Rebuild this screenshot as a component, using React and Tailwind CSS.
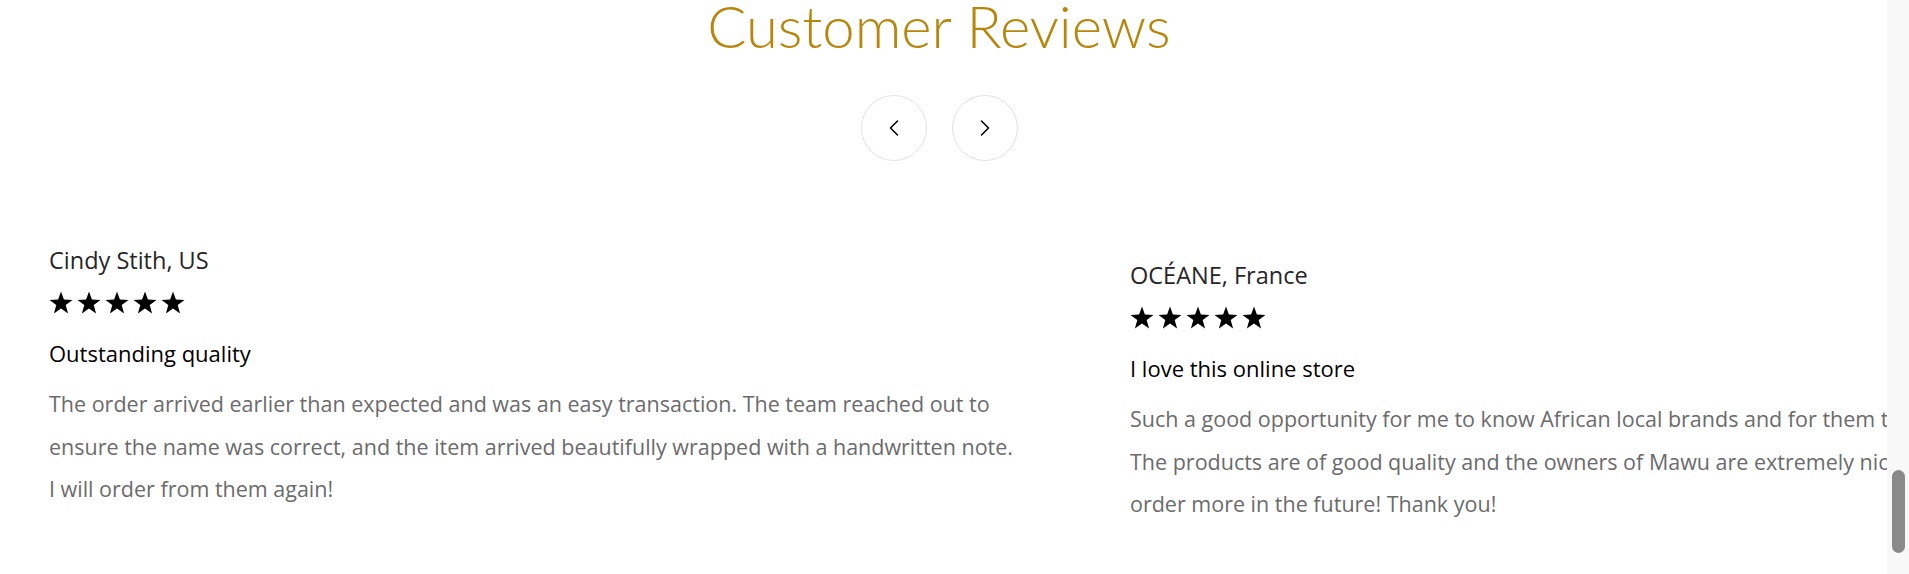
import { ChevronLeft, ChevronRight } from "lucide-react";

const REVIEWS = [
  {
    name: "Cindy Stith, US",
    title: "Outstanding quality",
    lines: [
      "The order arrived earlier than expected and was an easy transaction. The team reached out to",
      "ensure the name was correct, and the item arrived beautifully wrapped with a handwritten note.",
      "I will order from them again!",
    ],
    offset: "mt-0",
    width: "w-[1081px]",
  },
  {
    name: "OCÉANE, France",
    title: "I love this online store",
    lines: [
      "Such a good opportunity for me to know African local brands and for them to be known.",
      "The products are of good quality and the owners of Mawu are extremely nice. I will",
      "order more in the future! Thank you!",
    ],
    offset: "mt-[15px]",
    width: "w-[1051px]",
  },
];

function Star() {
  // 5-point star, outer radius ~12
  return (
    <svg width="24" height="23" viewBox="0 0 24 23" className="shrink-0">
      <polygon
        fill="#000"
        points="12,0.5 14.9,8.6 23.5,8.9 16.7,14.1 19.1,22.4 12,17.6 4.9,22.4 7.3,14.1 0.5,8.9 9.1,8.6"
      />
    </svg>
  );
}

function Review({ r }) {
  return (
    <div className={`${r.width} ${r.offset} shrink-0 font-['Open_Sans',sans-serif]`}>
      <p className="text-[23.5px] leading-[28px] text-[#262626]">{r.name}</p>
      <div className="flex gap-[4px] mt-[18px] h-[21px] items-center">
        {[0, 1, 2, 3, 4].map((i) => (
          <Star key={i} />
        ))}
      </div>
      <p className="text-[22px] leading-[28px] text-black mt-[26px]">{r.title}</p>
      <div className="mt-[16px] text-[21.5px] leading-[42.5px] text-[#6b6b6b]">
        {r.lines.map((l, i) => (
          <span key={i} className="block whitespace-nowrap">{l}</span>
        ))}
      </div>
    </div>
  );
}

export default function App() {
  return (
    <div className="relative w-[1909px] h-[574px] overflow-hidden bg-white font-['Lato',sans-serif]">
      <div className="w-[1878px]">
        <h2 className="text-center text-[58px] leading-[52px] font-light text-[#b8860b]">
          Customer Reviews
        </h2>

        <div className="flex justify-center gap-[25px] mt-[43px]">
          <button className="w-[66px] h-[66px] rounded-full border border-[#e3e3e3] flex items-center justify-center text-black">
            <ChevronLeft size={28} strokeWidth={1.3} />
          </button>
          <button className="w-[66px] h-[66px] rounded-full border border-[#e3e3e3] flex items-center justify-center text-black">
            <ChevronRight size={28} strokeWidth={1.3} />
          </button>
        </div>

        <div className="flex items-start pl-[49px] mt-[85px]">
          {REVIEWS.map((r) => (
            <Review key={r.name} r={r} />
          ))}
        </div>
      </div>

      {/* scrollbar track + thumb */}
      <div className="absolute right-0 top-0 w-[22px] h-full bg-[#f8f8f8]">
        <div className="absolute left-[5px] top-[470px] w-[13px] h-[83px] rounded-full bg-[#8a8a8a]" />
      </div>
    </div>
  );
}
